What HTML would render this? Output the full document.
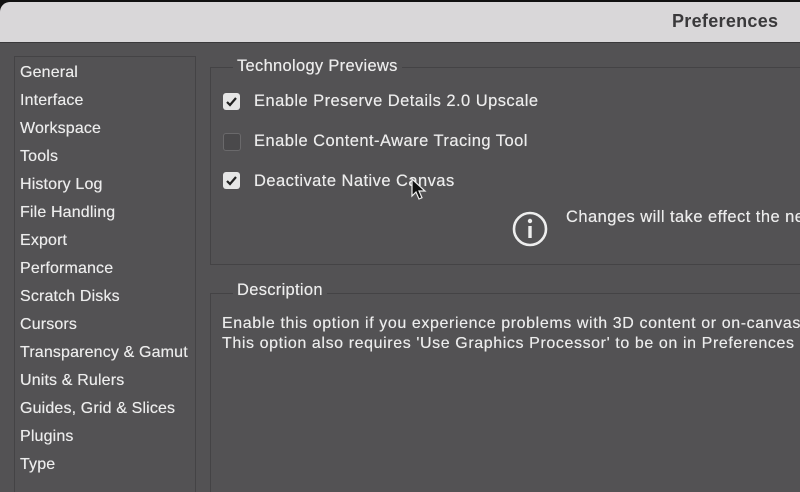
<!DOCTYPE html>
<html><head><style>
body{margin:0;width:800px;height:478px;overflow:hidden;background:#111;font-family:"Liberation Sans",sans-serif;}
.win{position:absolute;left:0;top:2px;width:812px;height:490px;background:#535254;border-radius:10px 0 0 0;overflow:hidden}
.title{height:40px;background:#d9d7d9;border-bottom:1px solid #3a393b;position:relative}
.title span{position:absolute;left:672px;top:9px;font-size:18px;font-weight:bold;color:#3a393b;letter-spacing:0.3px}
.side{position:absolute;left:14px;top:54px;width:180px;height:440px;border:1px solid #444345}
.side div{position:absolute;left:5px;font-size:16px;color:#ececec;letter-spacing:0.15px;text-shadow:0 0 0.4px #ececec}
.box{position:absolute;border:1px solid #444345;border-right:none}
.lg{position:absolute;font-size:16.5px;color:#ececec;background:#535254;padding:0 4px;letter-spacing:0.3px;text-shadow:0 0 0.4px #ececec}
.t{position:absolute;font-size:16.5px;color:#ececec;white-space:nowrap;letter-spacing:0.45px;text-shadow:0 0 0.4px #ececec}
.cb{position:absolute;left:223px;width:17px;height:17px;border-radius:3px}
</style></head><body>
<div class="win">
<div class="title"><span>Preferences</span></div>
<div class="side">
<div style="top:7px">General</div><div style="top:35px">Interface</div><div style="top:63px">Workspace</div><div style="top:91px">Tools</div><div style="top:119px">History Log</div><div style="top:147px">File Handling</div><div style="top:175px">Export</div><div style="top:203px">Performance</div><div style="top:231px">Scratch Disks</div><div style="top:259px">Cursors</div><div style="top:287px">Transparency &amp; Gamut</div><div style="top:315px">Units &amp; Rulers</div><div style="top:343px">Guides, Grid &amp; Slices</div><div style="top:371px">Plugins</div><div style="top:399px">Type</div>
</div>
<div class="box" style="left:210px;top:65px;width:600px;height:196px"></div>
<div class="lg" style="left:233px;top:55px">Technology Previews</div>
<div class="cb" style="top:91px;background:#e6e6e6"><svg width="17" height="17"><path d="M4 9l3 3L13 5" stroke="#222" stroke-width="2.2" fill="none"/></svg></div>
<div class="t" style="left:254px;top:90px">Enable Preserve Details 2.0 Upscale</div>
<div class="cb" style="top:131px;background:#4a494b;border:1px solid #6a696b;width:16px;height:16px"></div>
<div class="t" style="left:254px;top:130px">Enable Content-Aware Tracing Tool</div>
<div class="cb" style="top:170px;background:#e6e6e6"><svg width="17" height="17"><path d="M4 9l3 3L13 5" stroke="#222" stroke-width="2.2" fill="none"/></svg></div>
<div class="t" style="left:254px;top:170px">Deactivate Native Canvas</div>
<svg style="position:absolute;left:410px;top:175px" width="18" height="26"><path d="M2 2v17l4-4 3 7 3-1.3-3-6.7h6z" fill="#111" stroke="#eee" stroke-width="1.2"/></svg>
<svg style="position:absolute;left:511px;top:208px" width="38" height="38"><circle cx="19" cy="19" r="16" stroke="#eee" stroke-width="2.6" fill="none"/><circle cx="19" cy="11" r="2.2" fill="#eee"/><rect x="17.3" y="16" width="3.4" height="12" fill="#eee"/></svg>
<div class="t" style="left:566px;top:206px">Changes will take effect the next time you start Photoshop.</div>
<div class="box" style="left:210px;top:291px;width:600px;height:200px"></div>
<div class="lg" style="left:233px;top:279px">Description</div>
<div class="t" style="left:222px;top:313px;font-size:16px;letter-spacing:0.6px">Enable this option if you experience problems with 3D content or on-canvas</div>
<div class="t" style="left:222px;top:333px;font-size:16px;letter-spacing:0.6px">This option also requires 'Use Graphics Processor' to be on in Preferences</div>
</div>
</body></html>
